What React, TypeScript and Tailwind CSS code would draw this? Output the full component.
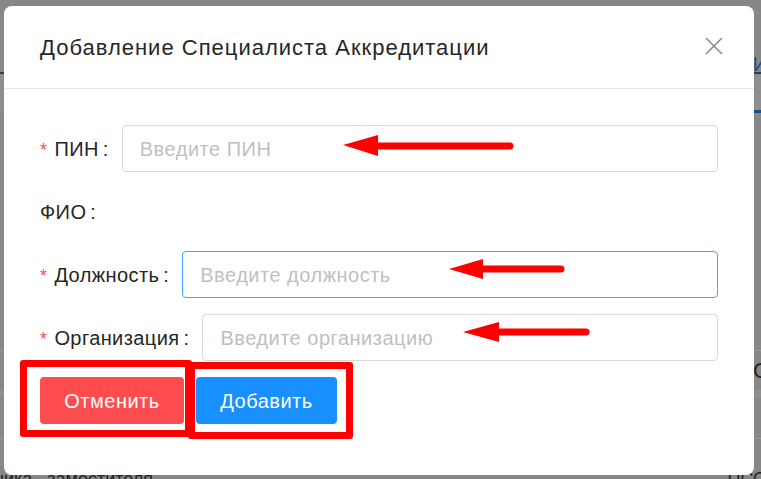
import React from "react";

function Row({
  label,
  required,
  placeholder,
  focused,
  noInput,
}: {
  label: string;
  required?: boolean;
  placeholder?: string;
  focused?: boolean;
  noInput?: boolean;
}) {
  return (
    <div className="flex items-center h-[47px]">
      <div className="flex items-center text-[20px] tracking-[0.4px] text-[#262626] whitespace-nowrap">
        {required ? (
          <span className="text-[#ff4d4f] text-[18px] mr-[7px] mt-[3px] leading-none">*</span>
        ) : null}
        <span>{label}</span>
        <span className="ml-[4px] mr-[13px]">:</span>
      </div>
      {noInput ? null : (
        <div
          className={
            focused
              ? "flex-1 h-[47px] rounded-[4px] border border-[#40a9ff] flex items-center px-[17px] text-[20px] tracking-[0.5px] text-[#bfbfbf]"
              : "flex-1 h-[47px] rounded-[4px] border border-[#d9d9d9] flex items-center px-[17px] text-[20px] tracking-[0.5px] text-[#bfbfbf]"
          }
        >
          {placeholder}
        </div>
      )}
    </div>
  );
}

export default function App() {
  return (
    <div
      className="relative w-[761px] h-[479px] overflow-hidden bg-[#878787] flex flex-col"
      style={{ fontFamily: '"Liberation Sans", Arial, sans-serif' }}
    >
      {/* page behind the dimmed overlay */}
      <div className="shrink-0 h-[72px] flex items-end justify-end">
        <span className="text-[20px] leading-[24px] text-[#1f4f8f] mr-[-6px] mb-[-4px]">И</span>
      </div>
      <div className="shrink-0 h-[2px] bg-[#3a3a3a]" />
      <div className="shrink-0 h-[39px] bg-[#8e8e8e] flex items-end justify-end">
        <div className="w-[10px] h-[3px] bg-[#1a4d8c]" />
      </div>
      <div className="shrink-0 h-[237px]" />
      <div className="shrink-0 h-[1px] bg-[#9a9a9a]" />
      <div className="shrink-0 h-[39px] flex items-center justify-end">
        <span className="text-[22px] text-[#222] mr-[-8px]">С</span>
      </div>
      <div className="shrink-0 h-[8px] bg-[#8f8f8f]" />
      <div className="shrink-0 h-[40px]" />
      <div className="shrink-0 h-[1px] bg-[#9a9a9a]" />
      <div className="shrink-0 flex justify-between items-start pt-[30px] text-[18px] leading-[20px] text-[#222] whitespace-nowrap">
        <span className="ml-[-6px]">ника&nbsp;&nbsp;&nbsp;заместителя</span>
        <span className="mr-[-6px]">ПСО</span>
      </div>

      {/* modal dialog over the page */}
      <div className="absolute left-[4px] top-[6px] w-[750px] h-[469px] bg-white rounded-[8px] flex flex-col">
        <div className="h-[83px] border-b border-[#e8e8e8] flex items-center justify-between pl-[36px] pr-[31px]">
          <div className="text-[22px] tracking-[1px] text-[#262626] pt-[1px]">
            Добавление Специалиста Аккредитации
          </div>
          <svg width="18" height="18" viewBox="0 0 18 18" className="mb-[2px]">
            <path d="M1 1 L17 17 M17 1 L1 17" stroke="#8c8c8c" strokeWidth="1.6" fill="none" />
          </svg>
        </div>
        <div className="pt-[36px] px-[36px] flex flex-col gap-[16px]">
          <Row label="ПИН" required placeholder="Введите ПИН" />
          <Row label="ФИО" noInput />
          <Row label="Должность" required placeholder="Введите должность" focused />
          <Row label="Организация" required placeholder="Введите организацию" />
          <div className="flex gap-[12px]">
            <button className="w-[144px] h-[47px] rounded-[4px] bg-[#ff4d4f] text-white text-[20px] tracking-[0.5px] font-medium">
              Отменить
            </button>
            <button className="w-[141px] h-[47px] rounded-[4px] bg-[#1890ff] text-white text-[20px] tracking-[0.5px] font-medium">
              Добавить
            </button>
          </div>
        </div>
      </div>

      {/* red annotations drawn over the screenshot */}
      <div className="absolute left-[20px] top-[360px] w-[172px] h-[77px] border-[7px] border-[#ff0000] rounded-[3px]" />
      <div className="absolute left-[188px] top-[362px] w-[165px] h-[77px] border-[7px] border-[#ff0000] rounded-[3px]" />
      <svg className="absolute left-0 top-0" width="761" height="479" viewBox="0 0 761 479">
        <g fill="#ff0000" stroke="#ff0000">
          <polygon points="343,145 378,135 378,156" strokeWidth="0" />
          <line x1="376" y1="146" x2="510" y2="146" strokeWidth="7" strokeLinecap="round" />
          <polygon points="449,269 483,259 483,279" strokeWidth="0" />
          <line x1="481" y1="269" x2="561" y2="269" strokeWidth="7" strokeLinecap="round" />
          <polygon points="463,332 499,322 499,342" strokeWidth="0" />
          <line x1="497" y1="332" x2="586" y2="332" strokeWidth="7" strokeLinecap="round" />
        </g>
      </svg>
    </div>
  );
}
